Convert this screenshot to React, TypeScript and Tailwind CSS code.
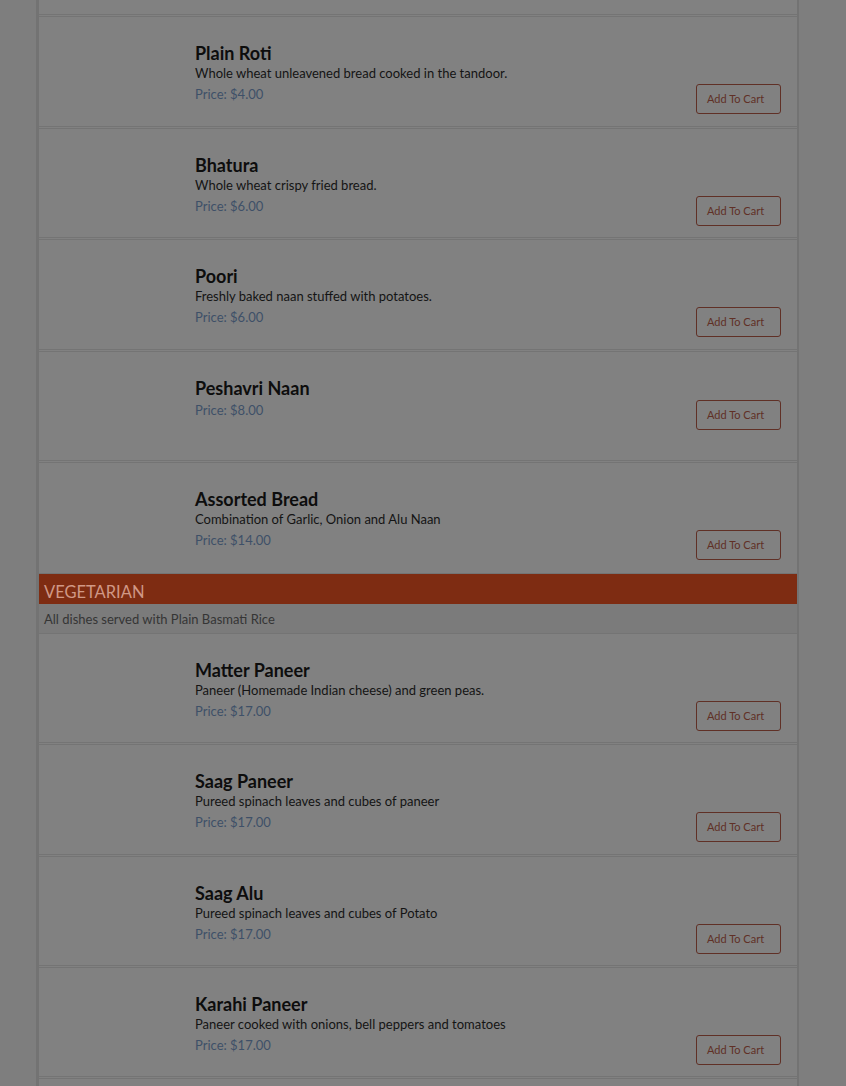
import React from "react";

type Item = { name: string; desc?: string; price: string; h: number };

const breads: Item[] = [
  { name: "Plain Roti", desc: "Whole wheat unleavened bread cooked in the tandoor.", price: "$4.00", h: 111 },
  { name: "Bhatura", desc: "Whole wheat crispy fried bread.", price: "$6.00", h: 110 },
  { name: "Poori", desc: "Freshly baked naan stuffed with potatoes.", price: "$6.00", h: 111 },
  { name: "Peshavri Naan", price: "$8.00", h: 110 },
  { name: "Assorted Bread", desc: "Combination of Garlic, Onion and Alu Naan", price: "$14.00", h: 112 },
];

const veg: Item[] = [
  { name: "Matter Paneer", desc: "Paneer (Homemade Indian cheese) and green peas.", price: "$17.00", h: 110 },
  { name: "Saag Paneer", desc: "Pureed spinach leaves and cubes of paneer", price: "$17.00", h: 111 },
  { name: "Saag Alu", desc: "Pureed spinach leaves and cubes of Potato", price: "$17.00", h: 110 },
  { name: "Karahi Paneer", desc: "Paneer cooked with onions, bell peppers and tomatoes", price: "$17.00", h: 110 },
];

function Row({ item }: { item: Item }) {
  return (
    <div
      className="flex border-y border-[#747474] bg-[#818181]"
      style={{ height: item.h }}
    >
      <div className="w-[156px] shrink-0" />
      <div className="flex flex-1 items-start pt-[26px] pr-[16px]">
        <div className="flex flex-1 items-end">
          <div className="flex-1 pb-[10px]">
            <div className="text-[18px] font-bold leading-[20px] text-[#0d0d0d]">{item.name}</div>
            {item.desc && (
              <div className="text-[13px] leading-[20px] text-[#141414]">{item.desc}</div>
            )}
            <div className={`${item.desc ? "mt-[1px]" : "mt-[2px]"} text-[13px] leading-[20px] text-[#3e5068]`}>
              Price: {item.price}
            </div>
          </div>
          <button className="h-[30px] w-[85px] rounded-[3px] border border-[#603026] bg-transparent text-left pl-[10px] text-[11px] text-[#603026]">
            Add To Cart
          </button>
        </div>
      </div>
    </div>
  );
}

export default function App() {
  return (
    <div
      className="min-h-screen bg-[#7e7e7e]"
      style={{ fontFamily: '"Source Sans Pro", Lato, "Noto Sans", sans-serif' }}
    >
      <div className="ml-[36px] w-[763px] border-l-[3px] border-r-[2px] border-[#737373] bg-[#818181] overflow-hidden h-[1086px]">
        <div className="flex flex-col gap-px">
          <div className="h-[15px] border-b border-[#747474] bg-[#818181]" />
          {breads.map((b) => (
            <Row key={b.name} item={b} />
          ))}
        </div>
        <div className="h-[30px] bg-[#7e2c12] pl-[5px] text-[16.5px] leading-[36px] text-[#d09886]">
          VEGETARIAN
        </div>
        <div className="h-[29px] bg-[#7b7b7b] pl-[5px] text-[13px] leading-[30px] text-[#353535]">
          All dishes served with Plain Basmati Rice
        </div>
        <div className="flex flex-col gap-px">
          {veg.map((b) => (
            <Row key={b.name} item={b} />
          ))}
          <div className="h-[20px] border-t border-[#747474] bg-[#818181]" />
        </div>
      </div>
    </div>
  );
}
